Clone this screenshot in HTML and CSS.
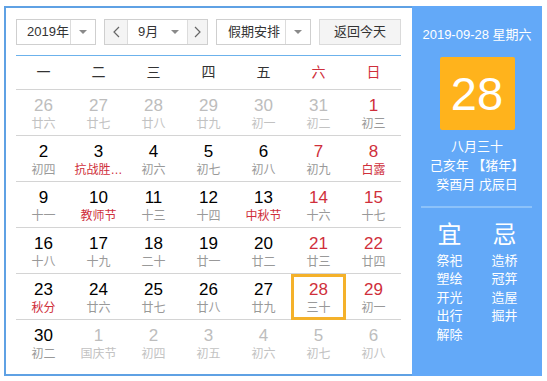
FILE: index.html
```html
<!DOCTYPE html>
<html lang="zh-CN">
  <head>
    <meta charset="UTF-8" />
    <title>万年历</title>
    <link rel="stylesheet" href="styles.css">
  </head>
  <body>
    <div class="calendar">
      <div class="cal-main">
        <div class="toolbar">
          <div class="select select-year">
            <span class="select-text">2019年</span>
            <span class="select-arrow"><i class="caret"></i></span>
          </div>
          <div class="select select-month">
            <span class="nav-btn">
              <svg width="7" height="12" viewBox="0 0 7 12"><polyline points="6,1 1,6 6,11" fill="none" stroke="#666" stroke-width="1.2"/></svg>
            </span>
            <span class="month-mid">
              <span class="select-text">9月</span>
              <span class="month-arrow"><i class="caret"></i></span>
            </span>
            <span class="nav-btn nav-next">
              <svg width="7" height="12" viewBox="0 0 7 12"><polyline points="1,1 6,6 1,11" fill="none" stroke="#666" stroke-width="1.2"/></svg>
            </span>
          </div>
          <div class="select select-holiday">
            <span class="select-text">假期安排</span>
            <span class="select-arrow"><i class="caret"></i></span>
          </div>
          <a class="btn-today" href="#">返回今天</a>
        </div>

        <div class="weekdays">
          <span>一</span><span>二</span><span>三</span><span>四</span><span>五</span>
          <span class="weekend">六</span><span class="weekend">日</span>
        </div>

        <div class="days">
          <div class="day other"><b>26</b><em>廿六</em></div>
          <div class="day other"><b>27</b><em>廿七</em></div>
          <div class="day other"><b>28</b><em>廿八</em></div>
          <div class="day other"><b>29</b><em>廿九</em></div>
          <div class="day other"><b>30</b><em>初一</em></div>
          <div class="day other"><b>31</b><em>初二</em></div>
          <div class="day weekend"><b>1</b><em>初三</em></div>

          <div class="day"><b>2</b><em>初四</em></div>
          <div class="day festival"><b>3</b><em>抗战胜…</em></div>
          <div class="day"><b>4</b><em>初六</em></div>
          <div class="day"><b>5</b><em>初七</em></div>
          <div class="day"><b>6</b><em>初八</em></div>
          <div class="day weekend"><b>7</b><em>初九</em></div>
          <div class="day weekend festival"><b>8</b><em>白露</em></div>

          <div class="day"><b>9</b><em>十一</em></div>
          <div class="day festival"><b>10</b><em>教师节</em></div>
          <div class="day"><b>11</b><em>十三</em></div>
          <div class="day"><b>12</b><em>十四</em></div>
          <div class="day festival"><b>13</b><em>中秋节</em></div>
          <div class="day weekend"><b>14</b><em>十六</em></div>
          <div class="day weekend"><b>15</b><em>十七</em></div>

          <div class="day"><b>16</b><em>十八</em></div>
          <div class="day"><b>17</b><em>十九</em></div>
          <div class="day"><b>18</b><em>二十</em></div>
          <div class="day"><b>19</b><em>廿一</em></div>
          <div class="day"><b>20</b><em>廿二</em></div>
          <div class="day weekend"><b>21</b><em>廿三</em></div>
          <div class="day weekend"><b>22</b><em>廿四</em></div>

          <div class="day festival"><b>23</b><em>秋分</em></div>
          <div class="day"><b>24</b><em>廿六</em></div>
          <div class="day"><b>25</b><em>廿七</em></div>
          <div class="day"><b>26</b><em>廿八</em></div>
          <div class="day"><b>27</b><em>廿九</em></div>
          <div class="day weekend today"><b>28</b><em>三十</em></div>
          <div class="day weekend"><b>29</b><em>初一</em></div>

          <div class="day"><b>30</b><em>初二</em></div>
          <div class="day other"><b>1</b><em>国庆节</em></div>
          <div class="day other"><b>2</b><em>初四</em></div>
          <div class="day other"><b>3</b><em>初五</em></div>
          <div class="day other"><b>4</b><em>初六</em></div>
          <div class="day other"><b>5</b><em>初七</em></div>
          <div class="day other"><b>6</b><em>初八</em></div>
        </div>
      </div>

      <div class="cal-side">
        <div class="side-date">2019-09-28 星期六</div>
        <div class="side-day">28</div>
        <div class="side-lunar">
          <p>八月三十</p>
          <p>己亥年 【猪年】</p>
          <p>癸酉月 戊辰日</p>
        </div>
        <div class="side-divider"></div>
        <div class="almanac">
          <div class="almanac-col">
            <div class="almanac-title">宜</div>
            <p>祭祀</p>
            <p>塑绘</p>
            <p>开光</p>
            <p>出行</p>
            <p>解除</p>
          </div>
          <div class="almanac-col">
            <div class="almanac-title">忌</div>
            <p>造桥</p>
            <p>冠笄</p>
            <p>造屋</p>
            <p>掘井</p>
          </div>
        </div>
      </div>
    </div>
  </body>
</html>
```

FILE: styles.css
```css
:root {
  --blue: #5fa1e4;
  --panel: #63a9f8;
  --line-blue: #6cb2ec;
  --grid-line: #d4d4d4;
  --red: #cf2f3b;
  --orange: #ffb31c;
  --muted: #999999;
  --faded: #c2c2c2;
}

* {
  box-sizing: border-box;
  margin: 0;
  padding: 0;
}

body {
  font-family: "Liberation Sans", "Noto Sans CJK SC", sans-serif;
  background: #ffffff;
  color: #000000;
}

.calendar {
  display: flex;
  width: 538px;
  height: 370px;
  margin: 6px 0 0 4px;
  border: 2px solid var(--blue);
}

.cal-main {
  width: 406px;
  padding: 11px 11px 0 10px;
}

/* toolbar */
.toolbar {
  display: flex;
  justify-content: space-between;
  height: 26px;
  font-size: 13px;
  color: #333;
}

.select {
  display: flex;
  height: 26px;
  border: 1px solid #cfcfcf;
  background: #fff;
  line-height: 24px;
}

.select-year {
  width: 80px;
}

.select-year .select-text {
  width: 54px;
  padding-left: 10px;
  border-right: 1px solid #dcdcdc;
}

.select-holiday {
  width: 95px;
}

.select-holiday .select-text {
  width: 69px;
  padding-left: 11px;
  border-right: 1px solid #dcdcdc;
}

.select-arrow {
  flex: 1;
  display: flex;
  align-items: center;
  justify-content: center;
}

.caret {
  display: block;
  width: 0;
  height: 0;
  border-left: 4px solid transparent;
  border-right: 4px solid transparent;
  border-top: 4px solid #8a8a8a;
}

.select-month {
  width: 104px;
}

.nav-btn {
  width: 23px;
  display: flex;
  align-items: center;
  justify-content: center;
  background: #f4f4f4;
  border-right: 1px solid #dcdcdc;
}

.nav-next {
  flex: 1;
  border-right: none;
  border-left: 1px solid #dcdcdc;
}

.month-mid {
  width: 59px;
  display: flex;
}

.month-mid .select-text {
  padding-left: 10px;
}

.month-arrow {
  margin-left: auto;
  width: 24px;
  display: flex;
  align-items: center;
  justify-content: center;
}

.btn-today {
  width: 82px;
  height: 26px;
  line-height: 24px;
  text-align: center;
  border: 1px solid #dadada;
  background: #f4f4f4;
  color: #333;
  text-decoration: none;
}

/* grid */
.weekdays {
  display: grid;
  grid-template-columns: repeat(7, 1fr);
  margin-top: 10px;
  height: 35px;
  line-height: 33px;
  border-top: 1px solid var(--line-blue);
  border-bottom: 1px solid var(--grid-line);
  text-align: center;
  font-size: 14px;
  color: #333;
}

.weekdays .weekend {
  color: var(--red);
}

.days {
  display: grid;
  grid-template-columns: repeat(7, 1fr);
}

.day {
  height: 46px;
  padding-top: 6px;
  text-align: center;
  border-bottom: 1px solid var(--grid-line);
}

.day:nth-last-child(-n + 7) {
  border-bottom: none;
}

.day b {
  display: block;
  font-weight: normal;
  font-size: 17px;
  line-height: 20px;
}

.day em {
  display: block;
  font-style: normal;
  font-size: 12px;
  line-height: 16px;
  color: var(--muted);
  white-space: nowrap;
}

.day.weekend b {
  color: var(--red);
}

.day.festival em {
  color: var(--red);
}

.day.other b {
  color: #bdbdbd;
}

.day.other em {
  color: var(--faded);
}

.day.today {
  outline: 3px solid #f4b12a;
  outline-offset: -3px;
}

/* side panel */
.cal-side {
  width: 130px;
  margin: -2px -2px -2px 0;
  padding-top: 20px;
  background: var(--panel);
  color: #ffffff;
  text-align: center;
}

.side-date {
  font-size: 13px;
  line-height: 18px;
}

.side-day {
  width: 75px;
  height: 73px;
  margin: 13px auto 0;
  background: var(--orange);
  border-radius: 2px;
  font-size: 47px;
  line-height: 73px;
}

.side-lunar {
  margin-top: 7px;
  font-size: 13px;
  line-height: 19px;
}

.side-divider {
  height: 2px;
  margin: 12px 10px 0 9px;
  background: #8cc2fa;
}

.almanac {
  display: flex;
  justify-content: center;
  gap: 5px;
  margin-top: 13px;
}

.almanac-col {
  width: 50px;
  font-size: 13px;
  line-height: 18.4px;
}

.almanac-title {
  font-size: 24px;
  line-height: 28px;
  font-weight: normal;
  margin-bottom: 3px;
}
```
